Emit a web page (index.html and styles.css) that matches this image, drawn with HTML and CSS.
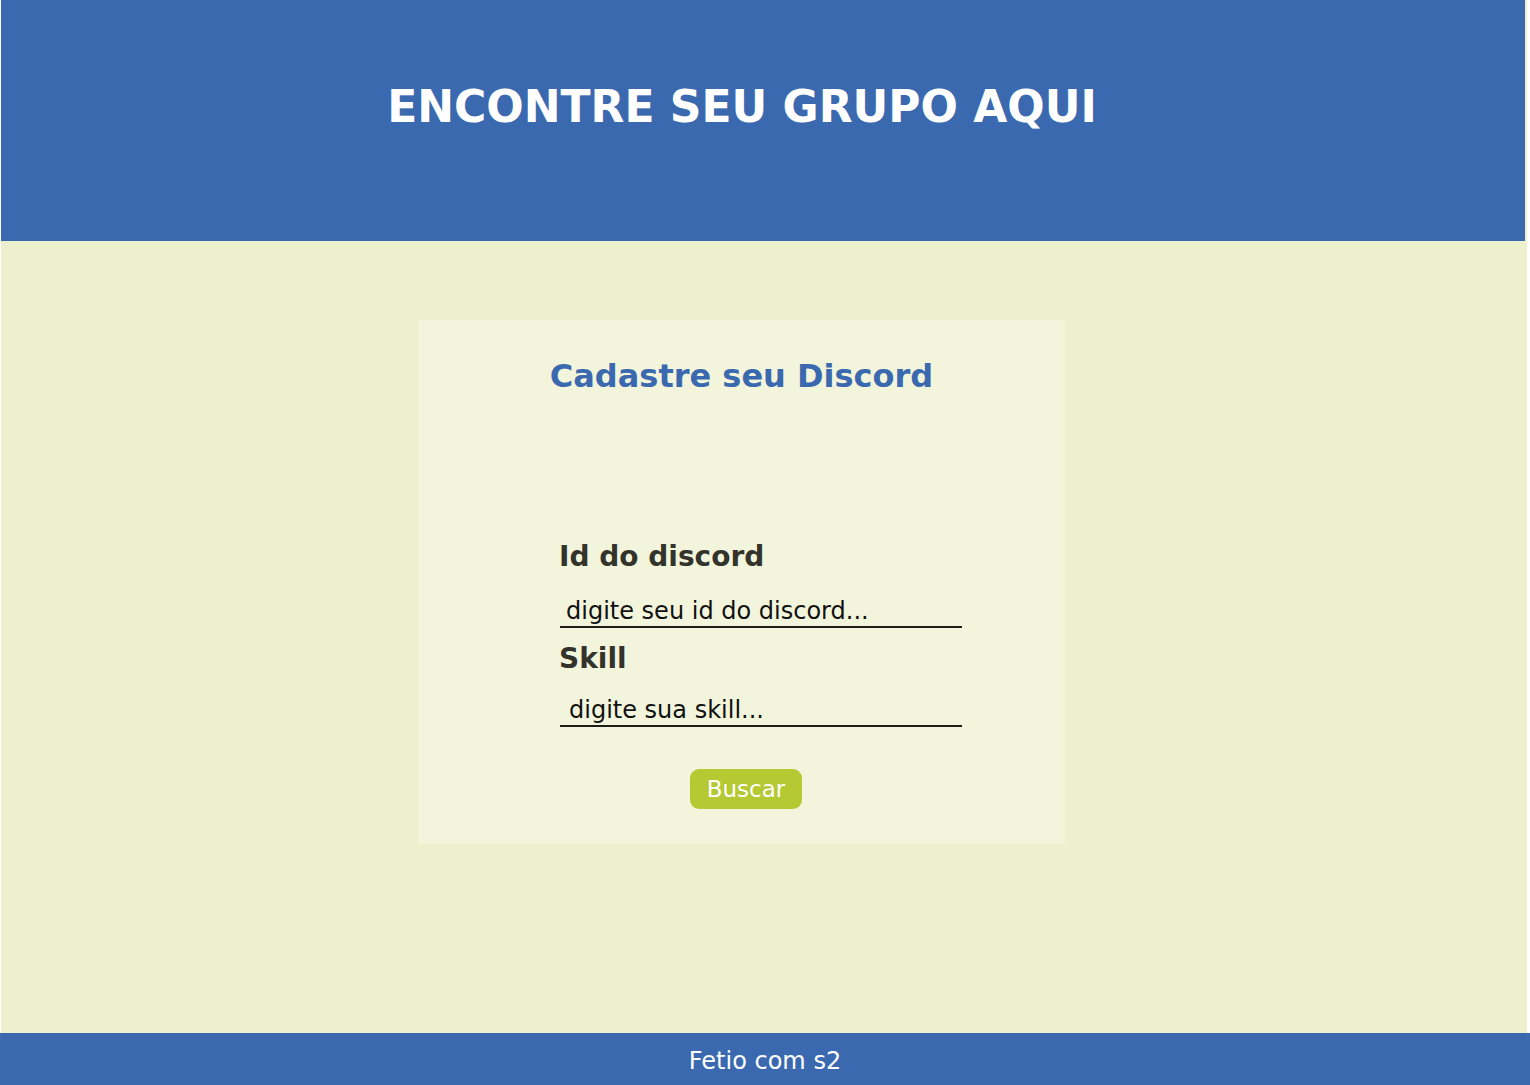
FILE: index.html
```html
<!DOCTYPE html>
<html lang="pt-BR">
<head>
<meta charset="utf-8">
<title>Encontre seu grupo aqui</title>
<link rel="stylesheet" href="styles.css">
</head>
<body>
<div class="page">
  <header class="topbar">
    <h1 class="topbar-title">ENCONTRE SEU GRUPO AQUI</h1>
  </header>
  <main class="content">
    <section class="card">
      <h2 class="card-title">Cadastre seu Discord</h2>
      <form class="form">
        <label class="field-label field-label-first" for="discord">Id do discord</label>
        <input class="field-input" id="discord" type="text" placeholder="digite seu id do discord...">
        <label class="field-label field-label-second" for="skill">Skill</label>
        <input class="field-input field-input-skill" id="skill" type="text" placeholder="digite sua skill...">
        <button class="btn" type="button">Buscar</button>
      </form>
    </section>
  </main>
</div>
<footer class="footer">Fetio com s2</footer>
</body>
</html>
```
FILE: styles.css
```css
* { box-sizing: border-box; }
html, body {
  margin: 0;
  padding: 0;
  background: #ffffff;
  font-family: "DejaVu Sans", Verdana, sans-serif;
}
.page {
  margin-left: 1px;
  width: 1526px;
  height: 1033px;
  background: #ecf0cd;
}
.topbar {
  width: 1524px;
  height: 241px;
  background: #3b69af;
  padding-top: 81px;
  padding-right: 42px;
}
.topbar-title {
  margin: 0;
  text-align: center;
  color: #ffffff;
  font-size: 44px;
  font-weight: bold;
  line-height: normal;
}
.content {
  padding-top: 79px;
  padding-right: 45px;
  display: flex;
  justify-content: center;
}
.card {
  width: 647px;
  height: 524px;
  background: #f2f5dc;
  padding-top: 37px;
}
.card-title {
  margin: 0;
  text-align: center;
  color: #3b69af;
  font-size: 32px;
  font-weight: bold;
  line-height: normal;
}
.form {
  display: flex;
  flex-direction: column;
  align-items: flex-start;
  margin-left: 141px;
}
.field-label {
  display: block;
  color: #33332b;
  font-size: 28px;
  font-weight: bold;
  line-height: normal;
}
.field-label-first { margin-top: 145px; }
.field-label-second { margin-top: 14px; }
.field-input {
  display: block;
  width: 402px;
  height: 33px;
  margin: 22px 0 0 1px;
  padding: 0 0 0 6px;
  border: none;
  border-bottom: 2px solid #1e1e18;
  background: transparent;
  font-family: "DejaVu Sans", Verdana, sans-serif;
  font-size: 24px;
  color: #111;
  outline: none;
}
.field-input::placeholder { color: #111111; opacity: 1; }
.field-input-skill {
  margin-top: 19px;
  padding-left: 9px;
}
.btn {
  margin: 42px 0 0 131px;
  width: 112px;
  height: 40px;
  padding: 0;
  border: none;
  border-radius: 9px;
  background: #b5c932;
  color: #ffffff;
  font-family: "DejaVu Sans", Verdana, sans-serif;
  font-size: 23px;
  line-height: 40px;
  text-align: center;
  cursor: pointer;
}
.footer {
  width: 1530px;
  height: 52px;
  overflow: hidden;
  background: #3b69af;
  color: #ffffff;
  font-size: 24px;
  text-align: center;
  line-height: 56px;
}
```
